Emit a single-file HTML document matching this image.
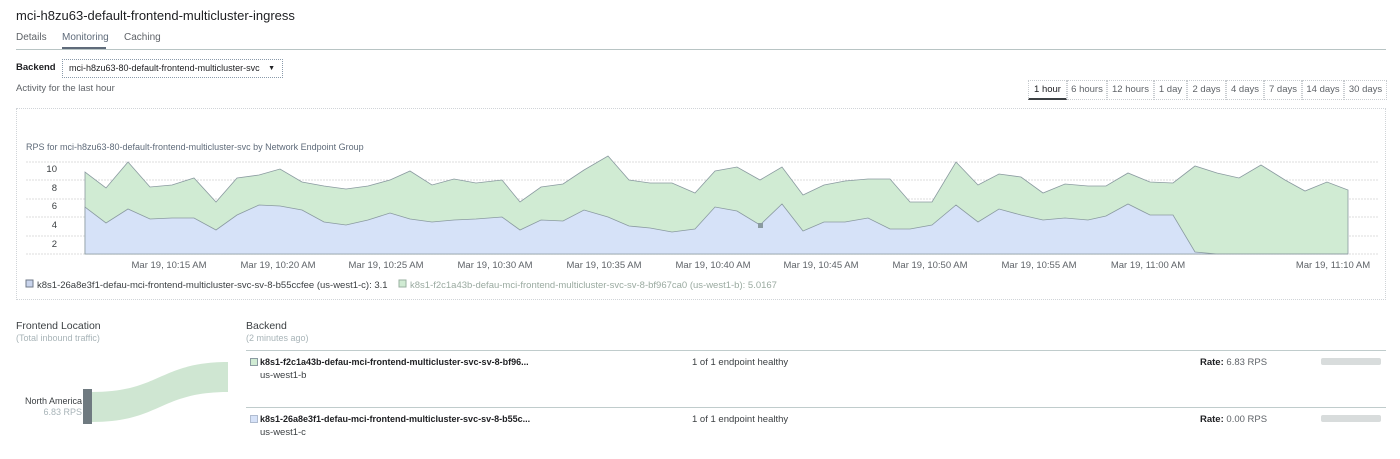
<!DOCTYPE html>
<html><head><meta charset="utf-8"><style>
*{margin:0;padding:0;box-sizing:border-box}
body{width:1400px;height:459px;background:#fff;font-family:"Liberation Sans",sans-serif;color:#202124;position:relative;overflow:hidden}
.a{position:absolute;white-space:nowrap}
.btn{position:absolute;top:80px;height:20px;border:1px dotted #c8ccd0;font-size:9.5px;color:#5f6368;text-align:center;line-height:18px}
</style></head><body>
<div class="a" style="left:16px;top:8px;font-size:13px;color:#202124">mci-h8zu63-default-frontend-multicluster-ingress</div>
<div class="a" style="left:16px;top:32px;font-size:10px;color:#5f6368">Details</div>
<div class="a" style="left:62px;top:32px;font-size:10px;color:#5f6b7a">Monitoring</div>
<div class="a" style="left:124px;top:32px;font-size:10px;color:#5f6368">Caching</div>
<div class="a" style="left:62px;top:47px;width:44px;height:2px;background:#5f6b7a"></div>
<div class="a" style="left:16px;top:49px;width:1370px;height:1px;background:#b8c4c4"></div>
<div class="a" style="left:16px;top:62px;font-size:9.5px;font-weight:bold">Backend</div>
<div class="a" style="left:62px;top:59px;width:221px;height:19px;border:1px dotted #8a9aaa;font-size:9px;line-height:17px;padding-left:6px">mci-h8zu63-80-default-frontend-multicluster-svc<span style="font-size:7px;position:absolute;right:7px">▼</span></div>
<div class="a" style="left:16px;top:83px;font-size:9.5px;color:#5f6368">Activity for the last hour</div>
<div class="btn" style="left:1028px;width:39px;color:#202124;border-bottom:2px solid #3c4043">1 hour</div>
<div class="btn" style="left:1067px;width:40px">6 hours</div>
<div class="btn" style="left:1107px;width:47px">12 hours</div>
<div class="btn" style="left:1154px;width:33px">1 day</div>
<div class="btn" style="left:1187px;width:39px">2 days</div>
<div class="btn" style="left:1226px;width:38px">4 days</div>
<div class="btn" style="left:1264px;width:38px">7 days</div>
<div class="btn" style="left:1302px;width:42px">14 days</div>
<div class="btn" style="left:1344px;width:43px">30 days</div>
<div class="a" style="left:16px;top:108px;width:1370px;height:192px;border:1px dotted #d0d4d8"></div>
<div class="a" style="left:26px;top:142px;font-size:9px;color:#5f6b7a">RPS for mci-h8zu63-80-default-frontend-multicluster-svc by Network Endpoint Group</div>
<svg class="a" style="left:0;top:0" width="1400" height="300">
<g stroke="#dcdcdc" stroke-width="1" stroke-dasharray="2,1">
<line x1="26" y1="162" x2="1378" y2="162"/><line x1="26" y1="180" x2="1378" y2="180"/><line x1="26" y1="199" x2="1378" y2="199"/><line x1="26" y1="217" x2="1378" y2="217"/><line x1="26" y1="236" x2="1378" y2="236"/><line x1="26" y1="254" x2="1378" y2="254"/>
</g>
<polygon fill="#d0ebd3" stroke="#8a9aa0" stroke-width="0.8" points="85,254 85,172 106,188 128,162 150,187 172,185 194,178 216,202 237,178 259,175 280,169 302,182 324,186 346,189 368,186 390,180 410,171 432,185 454,179 476,183 502,180 520,202 541,187 563,184 584,170 608,156 629,180 650,183 672,183 695,193 715,171 737,167 760,180 782,167 803,195 824,185 845,181 868,179 890,179 910,202 932,202 956,162 978,185 999,174 1021,177 1043,193 1065,184 1088,186 1106,186 1128,173 1150,182 1173,183 1195,166 1217,173 1239,178 1261,165 1285,180 1305,191 1327,182 1348,190 1348,254"/>
<polygon fill="#d6e2f8" stroke="#8a9aa0" stroke-width="0.8" points="85,254 85,207 106,223 128,209 150,219 172,218 194,218 216,230 237,215 259,205 280,206 302,210 324,222 346,225 368,220 390,213 410,219 432,222 454,220 476,219 502,217 520,230 541,220 563,221 584,210 608,217 629,226 650,228 672,232 695,229 715,207 737,211 760,225 782,204 803,231 824,222 845,222 868,218 890,229 910,229 932,225 956,205 978,222 999,209 1021,215 1043,220 1065,218 1088,220 1106,216 1128,204 1150,215 1173,215 1195,252 1217,254 1348,254"/>
<rect x="758" y="223" width="5" height="5" fill="#8a9aa0"/>
<g fill="#3c4043" font-size="9.5" font-family="Liberation Sans" text-anchor="end">
<text x="57" y="172">10</text><text x="57" y="191">8</text><text x="57" y="209">6</text><text x="57" y="228">4</text><text x="57" y="247">2</text></g>
<g fill="#5f6368" font-size="9.5" font-family="Liberation Sans" text-anchor="middle">
<text x="169" y="268">Mar 19, 10:15 AM</text><text x="278" y="268">Mar 19, 10:20 AM</text><text x="386" y="268">Mar 19, 10:25 AM</text><text x="495" y="268">Mar 19, 10:30 AM</text><text x="604" y="268">Mar 19, 10:35 AM</text><text x="713" y="268">Mar 19, 10:40 AM</text><text x="821" y="268">Mar 19, 10:45 AM</text><text x="930" y="268">Mar 19, 10:50 AM</text><text x="1039" y="268">Mar 19, 10:55 AM</text><text x="1148" y="268">Mar 19, 11:00 AM</text><text x="1333" y="268">Mar 19, 11:10 AM</text></g>
<rect x="26" y="280" width="7" height="7" fill="#c9d4ec" stroke="#6f7a88" stroke-width="1"/>
<rect x="399" y="280" width="7" height="7" fill="#d0ebd3" stroke="#9ab0a0" stroke-width="1"/>
<text x="37" y="288" font-size="9.5" font-family="Liberation Sans" fill="#3c4043">k8s1-26a8e3f1-defau-mci-frontend-multicluster-svc-sv-8-b55ccfee (us-west1-c): 3.1</text>
<text x="410" y="288" font-size="9.5" font-family="Liberation Sans" fill="#9aaaa0">k8s1-f2c1a43b-defau-mci-frontend-multicluster-svc-sv-8-bf967ca0 (us-west1-b): 5.0167</text>
</svg>
<div class="a" style="left:16px;top:320px;font-size:10.5px;color:#3c4043">Frontend Location</div>
<div class="a" style="left:16px;top:333px;font-size:9px;color:#a8b4b8">(Total inbound traffic)</div>
<div class="a" style="left:246px;top:320px;font-size:10.5px;color:#3c4043">Backend</div>
<div class="a" style="left:246px;top:333px;font-size:9px;color:#a8b4b8">(2 minutes ago)</div>
<div class="a" style="left:246px;top:350px;width:1140px;height:1px;background:#c0cccc"></div>
<div class="a" style="left:246px;top:407px;width:1140px;height:1px;background:#c0cccc"></div>
<svg class="a" style="left:0;top:340px" width="240" height="110">
<path d="M92,52 C160,52 160,22 228,22 L228,52 C160,52 160,82 92,82 Z" fill="#cfe6d2"/>
<rect x="83" y="49" width="9" height="35" fill="#6f7a80"/>
</svg>
<div class="a" style="right:1318px;top:396px;font-size:9px;color:#3c4043;text-align:right">North America</div>
<div class="a" style="right:1318px;top:407px;font-size:9px;color:#a8b4b8;text-align:right">6.83 RPS</div>
<div class="a" style="left:250px;top:358px;width:8px;height:8px;border:1px solid #8a9aa0;background:#d0ebd3"></div>
<div class="a" style="left:260px;top:357px;font-size:9px;font-weight:bold">k8s1-f2c1a43b-defau-mci-frontend-multicluster-svc-sv-8-bf96...</div>
<div class="a" style="left:260px;top:370px;font-size:9.5px;color:#3c4043">us-west1-b</div>
<div class="a" style="left:250px;top:415px;width:8px;height:8px;border:1px solid #b0bcd0;background:#d6e2f8"></div>
<div class="a" style="left:260px;top:414px;font-size:9px;font-weight:bold">k8s1-26a8e3f1-defau-mci-frontend-multicluster-svc-sv-8-b55c...</div>
<div class="a" style="left:260px;top:427px;font-size:9.5px;color:#3c4043">us-west1-c</div>
<div class="a" style="left:692px;top:357px;font-size:9.5px;color:#3c4043">1 of 1 endpoint healthy</div>
<div class="a" style="left:692px;top:414px;font-size:9.5px;color:#3c4043">1 of 1 endpoint healthy</div>
<div class="a" style="left:1200px;top:357px;font-size:9.5px;color:#5f6368"><b style="color:#202124">Rate:</b> 6.83 RPS</div>
<div class="a" style="left:1200px;top:414px;font-size:9.5px;color:#5f6368"><b style="color:#202124">Rate:</b> 0.00 RPS</div>
<div class="a" style="left:1321px;top:358px;width:60px;height:7px;background:#d8dcdc;border-radius:2px"></div>
<div class="a" style="left:1321px;top:415px;width:60px;height:7px;background:#d8dcdc;border-radius:2px"></div>
</body></html>
